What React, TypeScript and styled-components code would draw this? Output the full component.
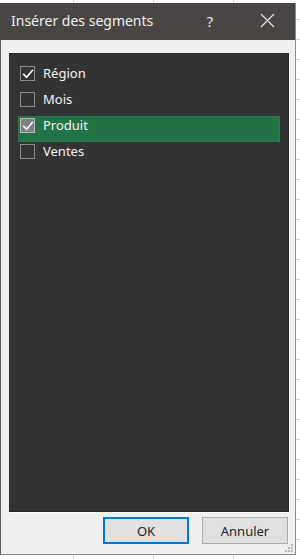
import React, { useState } from 'react';
import styled, { createGlobalStyle } from 'styled-components';

const GlobalStyle = createGlobalStyle`
    html, body {
        margin:0;
        padding:0;
    }
    body {
        font-family:"Noto Sans", "Open Sans", sans-serif;
        background-color:#ffffff;
        background-image:
            linear-gradient(to right, #d4d4d4 1px, transparent 1px),
            linear-gradient(to bottom, #d4d4d4 1px, transparent 1px);
        background-size:80px 20px;
        background-position:-7px -1px;
    }
`

type Field = { label: string; checked: boolean }

const initialFields: Field[] = [
    { label: 'Région', checked: true },
    { label: 'Mois', checked: false },
    { label: 'Produit', checked: true },
    { label: 'Ventes', checked: false },
]

function CheckMark() {
    return (
        <svg width="12" height="12" viewBox="0 0 12 12">
            <path d="M1.8 6.4 L4.6 9.2 L10.4 2.4" fill="none" stroke="#ffffff" strokeWidth="1.6" strokeLinecap="square" />
        </svg>
    )
}

function App() {
    const [fields, setFields] = useState(initialFields);
    const [selected, setSelected] = useState(2);

    const toggle = (i: number) => {
        setSelected(i)
        setFields(fields.map((f, j) => j === i ? { ...f, checked: !f.checked } : f))
    }

    return (
        <Page>
            <GlobalStyle />
            <Dialog>
                <TitleBar>
                    <Title>Insérer des segments</Title>
                    <TitleButton>?</TitleButton>
                    <CloseButton>
                        <svg width="15" height="15" viewBox="0 0 15 15">
                            <path d="M1 1 L14 14 M14 1 L1 14" stroke="#e8e8e8" strokeWidth="1.1" />
                        </svg>
                    </CloseButton>
                </TitleBar>

                <Body>
                    <FieldList>
                        {fields.map((f, i) => (
                            <FieldRow key={f.label} active={i === selected ? 1 : 0} onClick={() => toggle(i)}>
                                <CheckBox active={i === selected ? 1 : 0}>
                                    {f.checked && <CheckMark />}
                                </CheckBox>
                                <FieldLabel>{f.label}</FieldLabel>
                            </FieldRow>
                        ))}
                    </FieldList>

                    <Footer>
                        <DialogButton primary={1}>OK</DialogButton>
                        <DialogButton primary={0}>Annuler</DialogButton>
                    </Footer>
                </Body>

                <Grip>
                    <svg width="10" height="10" viewBox="0 0 10 10">
                        <rect x="7" y="1" width="2" height="2" fill="#b8b8b8" />
                        <rect x="4" y="4" width="2" height="2" fill="#b8b8b8" />
                        <rect x="7" y="4" width="2" height="2" fill="#b8b8b8" />
                        <rect x="1" y="7" width="2" height="2" fill="#b8b8b8" />
                        <rect x="4" y="7" width="2" height="2" fill="#b8b8b8" />
                        <rect x="7" y="7" width="2" height="2" fill="#b8b8b8" />
                    </svg>
                </Grip>
            </Dialog>
        </Page>
    )
}

export default App

const Page = styled.div`
    width:300px;
    height:559px;
    padding:3px 4px 4px 0;
    box-sizing:border-box;
`

const Dialog = styled.div`
    position:relative;
    display:flex;
    flex-direction:column;
    width:296px;
    height:552px;
    box-sizing:border-box;
    background-color:#f0f0f0;
    border-left:1px solid #5f5f5f;
    border-right:1px solid #8a8a8a;
    border-bottom:1px solid #8a8a8a;
`

const TitleBar = styled.div`
    display:flex;
    align-items:center;
    height:37px;
    flex-shrink:0;
    background-color:#484543;
    color:#f2f2f2;
    margin-left:-1px;
    padding-left:11px;
`

const Title = styled.div`
    flex:1;
    font-size:14px;
    color:#f0f0f0;
    padding-bottom:2px;
`

const TitleButton = styled.div`
    width:22px;
    text-align:center;
    font-size:15px;
    color:#e6e6e6;
    margin-right:35px;
    padding-bottom:2px;
`

const CloseButton = styled.div`
    display:flex;
    align-items:center;
    justify-content:center;
    width:22px;
    margin-right:17px;
    padding-bottom:3px;
`

const Body = styled.div`
    flex:1;
    display:flex;
    flex-direction:column;
    padding:13px 6px 0 8px;
`

const FieldList = styled.div`
    flex:1;
    background-color:#333333;
    border:1px solid #2a2a2a;
    box-shadow:1px 1px 0 #ffffff;
    padding:10px 8px 0 8px;
`

const FieldRow = styled.div<{ active: number }>`
    display:flex;
    align-items:flex-start;
    height:26px;
    padding:1px 0 0 1px;
    box-sizing:border-box;
    background-color:${props => props.active ? '#217346' : 'transparent'};
    border:1px solid ${props => props.active ? '#2a7a4e' : 'transparent'};
    cursor:pointer;
`

const CheckBox = styled.div<{ active: number }>`
    display:flex;
    align-items:center;
    justify-content:center;
    width:13px;
    height:13px;
    flex-shrink:0;
    border:1px solid ${props => props.active ? '#bdbdbd' : '#8c8c8c'};
    background-color:${props => props.active ? '#7d7d7d' : '#333333'};
`

const FieldLabel = styled.span`
    margin-left:8px;
    font-size:13px;
    line-height:15px;
    color:#f4f4f4;
`

const Footer = styled.div`
    display:flex;
    justify-content:flex-end;
    gap:13px;
    height:42px;
    padding:5px 1px 0 0;
    box-sizing:border-box;
`

const DialogButton = styled.button<{ primary: number }>`
    width:86px;
    height:27px;
    box-sizing:border-box;
    font-family:"Noto Sans", "Open Sans", sans-serif;
    font-size:13px;
    color:#1e1e2e;
    background-color:#e1e1e1;
    border:${props => props.primary ? '2px solid #0078d7' : '1px solid #adadad'};
    padding:0;
    cursor:pointer;
`

const Grip = styled.div`
    position:absolute;
    right:1px;
    bottom:1px;
    line-height:0;
`
